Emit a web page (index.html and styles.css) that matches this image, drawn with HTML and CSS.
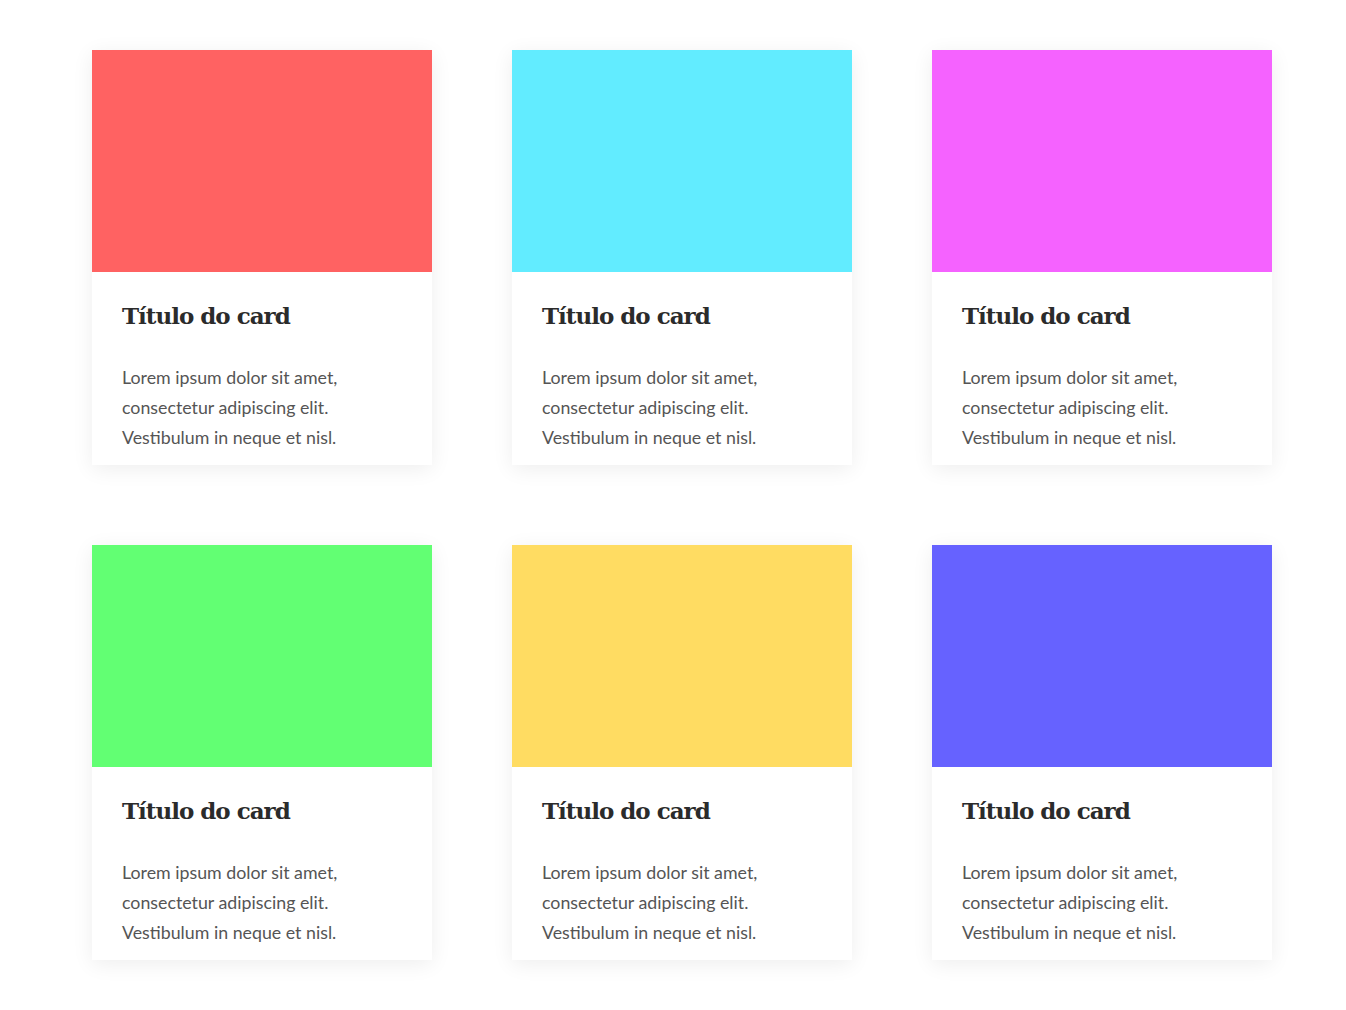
FILE: index.html
```html
<!DOCTYPE html>
<html lang="pt">
<head>
<meta charset="utf-8">
<title>Cards</title>
<link rel="stylesheet" href="styles.css">
</head>
<body>
<main class="grid">
  <article class="card"><div class="card-img red"></div><div class="card-body"><h2 class="card-title">Título do card</h2><p class="card-text">Lorem ipsum dolor sit amet, consectetur adipiscing elit. Vestibulum in neque et nisl.</p></div></article>
  <article class="card"><div class="card-img cyan"></div><div class="card-body"><h2 class="card-title">Título do card</h2><p class="card-text">Lorem ipsum dolor sit amet, consectetur adipiscing elit. Vestibulum in neque et nisl.</p></div></article>
  <article class="card"><div class="card-img pink"></div><div class="card-body"><h2 class="card-title">Título do card</h2><p class="card-text">Lorem ipsum dolor sit amet, consectetur adipiscing elit. Vestibulum in neque et nisl.</p></div></article>
  <article class="card"><div class="card-img green"></div><div class="card-body"><h2 class="card-title">Título do card</h2><p class="card-text">Lorem ipsum dolor sit amet, consectetur adipiscing elit. Vestibulum in neque et nisl.</p></div></article>
  <article class="card"><div class="card-img yellow"></div><div class="card-body"><h2 class="card-title">Título do card</h2><p class="card-text">Lorem ipsum dolor sit amet, consectetur adipiscing elit. Vestibulum in neque et nisl.</p></div></article>
  <article class="card"><div class="card-img blue"></div><div class="card-body"><h2 class="card-title">Título do card</h2><p class="card-text">Lorem ipsum dolor sit amet, consectetur adipiscing elit. Vestibulum in neque et nisl.</p></div></article>
</main>
</body>
</html>
```
FILE: styles.css
```css
html, body {
  margin: 0;
  padding: 0;
  background: #fff;
}
.grid {
  display: grid;
  grid-template-columns: repeat(3, 340px);
  column-gap: 80px;
  row-gap: 80px;
  padding: 50px 0 50px 92px;
}
.card {
  background: #fff;
  box-shadow: 0 4px 20px rgba(0, 0, 0, 0.07);
}
.card-img {
  height: 222px;
}
.red { background: #ff6262; }
.cyan { background: #62ecff; }
.pink { background: #f562ff; }
.green { background: #62ff73; }
.yellow { background: #ffdc62; }
.blue { background: #6662ff; }
.card-body {
  padding: 27px 30px 13px 30px;
}
.card-title {
  margin: 0 0 29px 0;
  font-family: "DejaVu Serif", serif;
  font-weight: bold;
  font-size: 23px;
  line-height: 34px;
  color: #2b2b2b;
  letter-spacing: -1px;
}
.card-text {
  margin: 0;
  font-family: Lato, sans-serif;
  font-size: 17.8px;
  line-height: 30px;
  color: #555;
  width: 250px;
}
```
